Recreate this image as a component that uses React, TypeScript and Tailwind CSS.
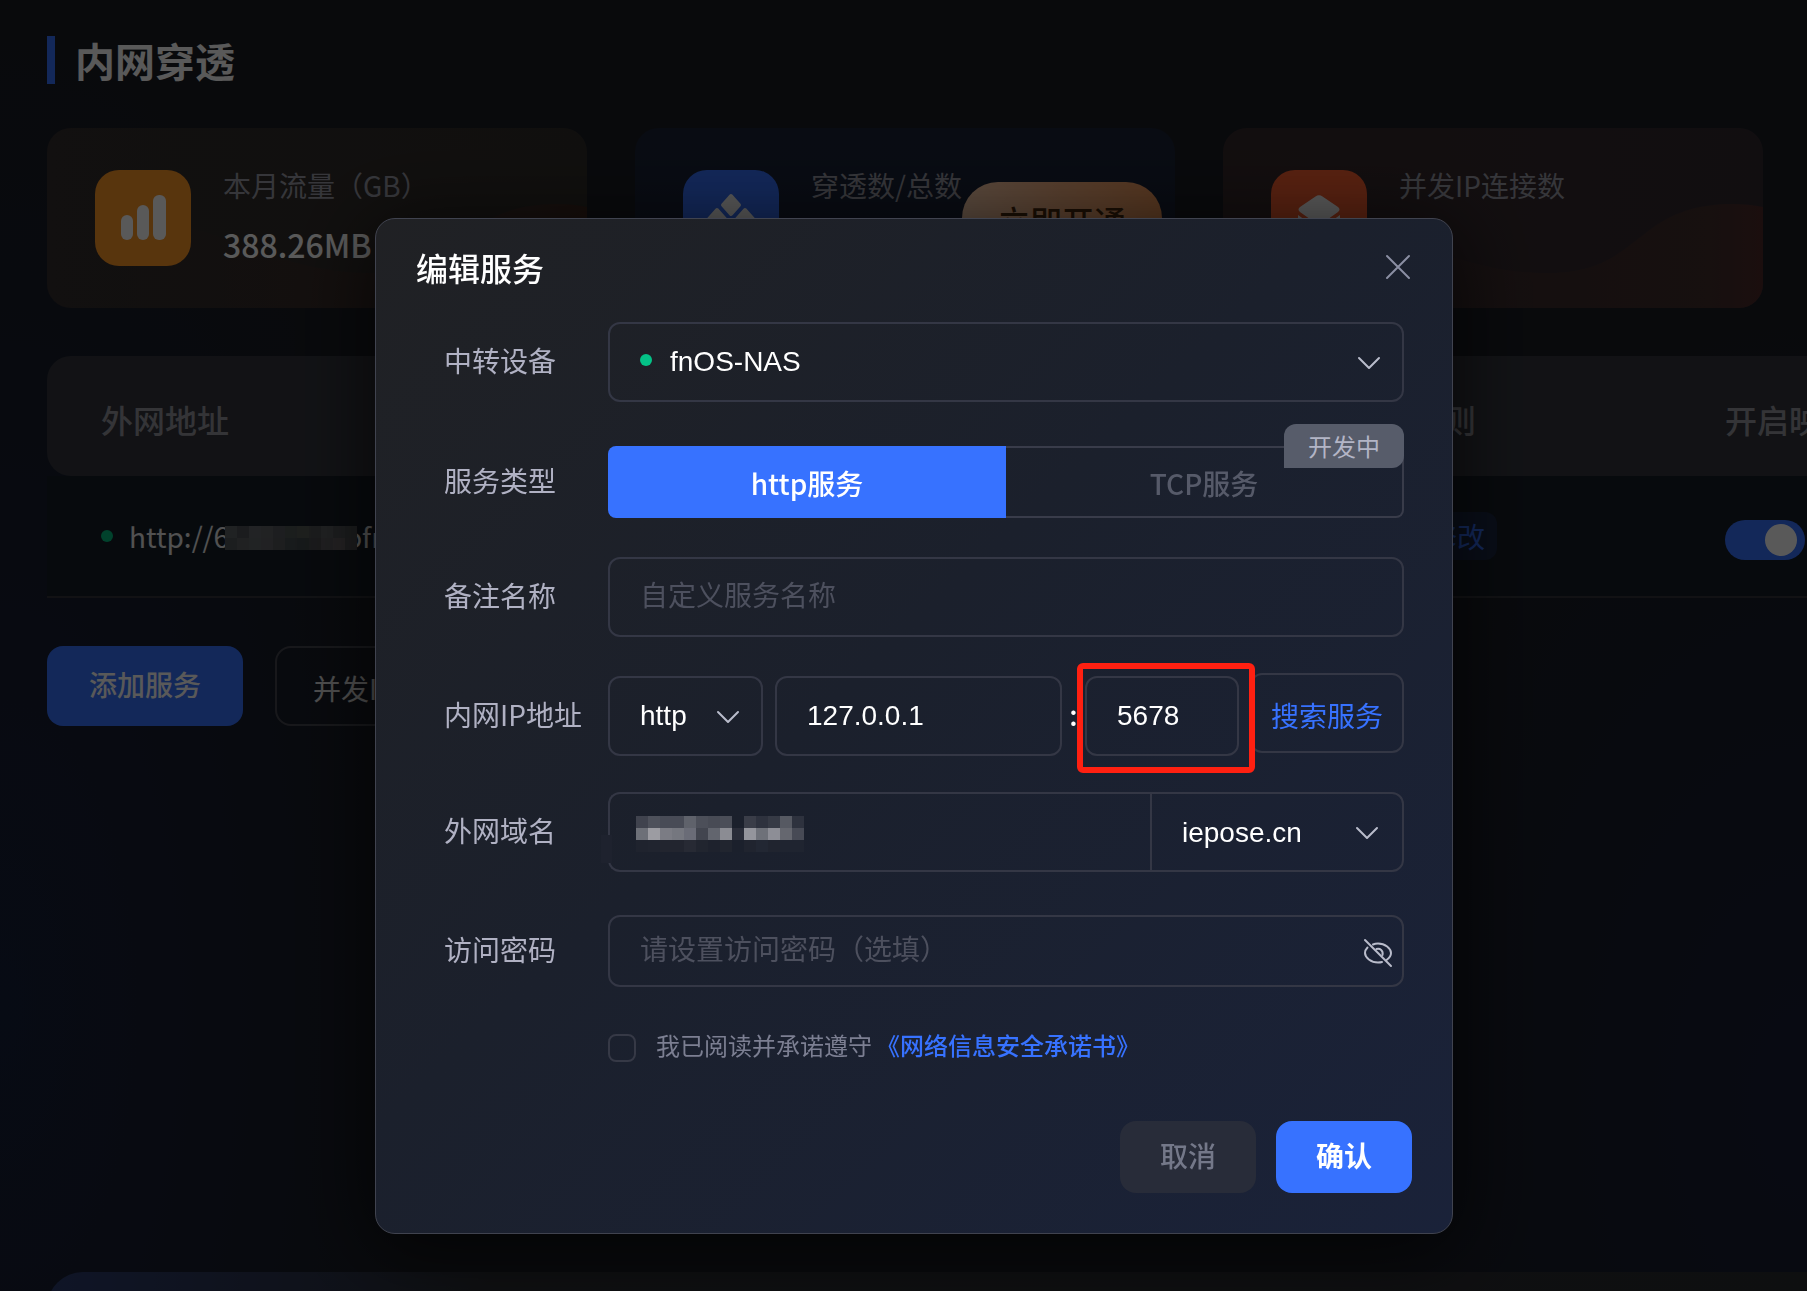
import { useState } from "react";
import type { ReactNode } from "react";
import clsx from "clsx";

const fieldClass =
  "w-full rounded-xl border-2 border-[#343745] bg-transparent px-[30px] font-['Liberation_Sans','Noto_Sans_CJK_SC',sans-serif] text-[28px] text-white outline-none placeholder:text-[#4d505e]";

// one colour per block, row by row
const domainBlocks = [
  ["#40434e", "#4e515b", "#484b56", "#484b56", "#5f626b", "#4c4f59", "#484b55", "#4b4e58", "#1b202c", "#3a3d48", "#2e323e", "#363a45", "#565962", "#2e323e"],
  ["#6d7078", "#9c9ca2", "#7b7c84", "#75777f", "#6a6c77", "#42454f", "#62656e", "#8b8c93", "#2a2d39", "#94959c", "#6e7179", "#8d8e96", "#65676f", "#474a55"],
  ["#1f232e", "#20242f", "#22252f", "#22252f", "#272a34", "#21252f", "#1e222d", "#21252f", "#1b202c", "#20242f", "#222733", "#20242f", "#1f2430", "#1f2430"],
];

const urlBlocks = [
  ["#5d6166", "#4e5257", "#63666a", "#5e6165", "#53585d", "#4f5654", "#565c56", "#4f5254", "#5c5f62", "#525458", "#4d5053"],
  ["#52565a", "#5c5f63", "#606468", "#5f6064", "#53565b", "#474d50", "#42494b", "#4b4c50", "#5b5a5e", "#655e63", "#504f54"],
];

function Blocks({ rows, className, cell }: { rows: string[][]; className?: string; cell: string }) {
  return (
    <div aria-hidden="true" className={clsx("pointer-events-none", className)}>
      {rows.map((row, y) => (
        <div key={y} className="flex">
          {row.map((color, x) => (
            <span key={x} className={cell} style={{ backgroundColor: color }} />
          ))}
        </div>
      ))}
    </div>
  );
}

function Chevron({ className }: { className?: string }) {
  return (
    <svg
      viewBox="0 0 24 14"
      fill="none"
      stroke="#b9bccb"
      strokeWidth="2"
      strokeLinecap="round"
      strokeLinejoin="round"
      className={clsx("pointer-events-none absolute h-[14px] w-6", className)}
    >
      <path d="M2 2l10 10L22 2" />
    </svg>
  );
}

function BarsIcon() {
  return (
    <svg viewBox="0 0 96 96" fill="#fff" className="size-24">
      <rect x="26" y="45" width="12" height="25" rx="6" />
      <rect x="42" y="35" width="12" height="35" rx="6" />
      <rect x="58" y="25" width="13" height="45" rx="6" />
    </svg>
  );
}

function DiamondsIcon() {
  return (
    <svg viewBox="0 0 96 96" fill="#fff" stroke="#fff" strokeWidth="4" strokeLinejoin="round" className="size-24">
      <path d="M48 26l8 9-8 9-8-9z" />
      <path d="M34 40l8 9-8 9-8-9z" />
      <path d="M62 40l8 9-8 9-8-9z" />
      <path d="M48 54l8 9-8 9-8-9z" />
    </svg>
  );
}

function LayersIcon() {
  return (
    <svg viewBox="0 0 96 96" fill="#fff" className="size-24">
      <path d="M44.500 26.500Q48 24 51.500 26.500L67 37Q70 39.500 67 42L51.500 53Q48 55.500 44.500 53L29 42Q26 39.500 29 37Z" />
      <path d="M27 45l21 15 21-15v6L51 65q-3 2-6 0L27 51z" />
    </svg>
  );
}

function Wave({ from, to, id }: { from: string; to: string; id: string }) {
  return (
    <svg viewBox="0 0 540 180" preserveAspectRatio="none" className="absolute inset-0 size-full">
      <defs>
        <linearGradient id={id} x1="0" y1="0" x2="1" y2="0">
          <stop offset="0.1" stopColor={from} stopOpacity="0" />
          <stop offset="0.9" stopColor={from} />
          <stop offset="1" stopColor={to} />
        </linearGradient>
      </defs>
      <path
        d="M0 130C60 90 120 90 170 108C230 130 270 145 325 145C420 145 410 76 510 76Q526 76 540 79V180H0Z"
        fill={`url(#${id})`}
      />
    </svg>
  );
}

interface StatCardProps {
  label: string;
  icon: ReactNode;
  wave?: ReactNode;
  className: string;
  iconClassName: string;
  children?: ReactNode;
}

function StatCard({ label, icon, wave, className, iconClassName, children }: StatCardProps) {
  return (
    <div className={clsx("relative flex h-[180px] flex-1 gap-8 overflow-hidden rounded-3xl px-12 pt-[42px]", className)}>
      {wave}
      <div className={clsx("z-10 size-24 shrink-0 rounded-3xl", iconClassName)}>{icon}</div>
      <div className="z-10 whitespace-nowrap">
        <div className="text-[28px] leading-[30px] text-[#9a9ba6]">{label}</div>
        {children}
      </div>
    </div>
  );
}

function FormRow({ label, htmlFor, className, children }: { label: string; htmlFor?: string; className?: string; children: ReactNode }) {
  return (
    <div className={clsx("flex items-center pr-2 pl-7", className)}>
      <label htmlFor={htmlFor} className="w-[164px] shrink-0 pb-1 text-[28px] leading-10 whitespace-nowrap text-[#b0b1c3]">
        {label}
      </label>
      <div className="relative min-w-0 flex-1">{children}</div>
    </div>
  );
}

function Dashboard() {
  return (
    <main className="h-full pr-11 pl-[47px]">
      <div className="flex items-center gap-5 pt-9">
        <span className="h-12 w-2 bg-[#3772ff]" />
        <h1 className="text-[40px] leading-12 font-bold text-white">内网穿透</h1>
      </div>

      <section className="mt-11 flex gap-12">
        <StatCard
          label="本月流量（GB）"
          icon={<BarsIcon />}
          wave={<Wave id="wave-traffic" from="#3e2c28" to="#40281f" />}
          className="bg-linear-to-r from-[#342e2e] to-[#302d29]"
          iconClassName="bg-[#fb9727]"
        >
          <div className="mt-6 text-[32px] leading-10 font-medium text-white">388.26MB</div>
        </StatCard>
        <StatCard
          label="穿透数/总数"
          icon={<DiamondsIcon />}
          className="bg-linear-to-b from-[#1b2437] to-[#171f36]"
          iconClassName="bg-[#3772ff]"
        >
          <button
            type="button"
            className="absolute top-[54px] right-[13px] h-[72px] w-[200px] rounded-[36px] bg-linear-to-r from-[#ffd2b0] via-[#f9b382] to-[#f39a5a] pt-1 text-[32px] leading-10 font-medium text-[#4a2a0c]"
          >
            立即开通
          </button>
        </StatCard>
        <StatCard
          label="并发IP连接数"
          icon={<LayersIcon />}
          wave={<Wave id="wave-ip" from="#422e2c" to="#4e2a2a" />}
          className="bg-linear-to-r from-[#36292b] to-[#332a30]"
          iconClassName="bg-[#fc6030]"
        />
      </section>

      <table className="mt-12 w-[1960px] table-fixed border-separate border-spacing-0 text-left">
        <thead>
          <tr className="h-[120px] text-[32px] text-[#96969f]">
            <th className="w-[1301px] rounded-l-3xl bg-[#34363e] pt-[6px] pl-[54px] font-medium">外网地址</th>
            <th className="w-[377px] bg-[#34363e] pt-[6px] font-medium">访问规则</th>
            <th className="bg-[#34363e] pt-[6px] font-medium">开启映射</th>
          </tr>
        </thead>
        <tbody>
          <tr className="h-[122px] bg-[#161d26] text-[28px] text-[#e8e8e8]">
            <td className="border-b-2 border-[#34353b] pl-[54px]">
              <div className="flex items-center">
                <span className="mr-4 size-3 rounded-full bg-[#04bd7e]" />
                <span>http://6</span>
                <Blocks rows={urlBlocks} cell="block h-3 w-3" className="z-10 mt-1 -ml-1" />
                <span className="-ml-3">ofn</span>
              </div>
            </td>
            <td className="border-b-2 border-[#34353b]">
              <button type="button" className="ml-[69px] h-12 w-20 rounded-xl bg-[#1a2744] text-[#3772ff]">
                修改
              </button>
            </td>
            <td className="border-b-2 border-[#34353b] pt-2">
              <input
                type="checkbox"
                role="switch"
                defaultChecked
                aria-label="开启映射"
                className="flex h-10 w-20 appearance-none items-center justify-end rounded-full bg-[#3772ff] pr-2 before:size-8 before:rounded-full before:bg-white"
              />
            </td>
          </tr>
        </tbody>
      </table>

      <div className="mt-12 flex gap-8">
        <button type="button" className="h-20 w-[196px] rounded-2xl bg-[#3772ff] pb-1 text-[28px] font-medium text-white">
          添加服务
        </button>
        <button type="button" className="h-20 rounded-2xl border-2 border-[#45474f] px-9 pt-1 text-[28px] text-[#e0e0e0]">
          并发IP
        </button>
      </div>

      <section className="mt-[546px] -mr-20 h-40 rounded-[36px] bg-linear-to-r from-[#2c3c70] via-[#2b2d32] via-25% to-[#2a2b30]" />
    </main>
  );
}

function EditServiceDialog() {
  const [showPassword, setShowPassword] = useState(false);
  const [agreed, setAgreed] = useState(false);

  return (
    <div
      role="dialog"
      aria-modal="true"
      aria-labelledby="dialog-title"
      className="w-[1078px] max-w-full rounded-[20px] border border-[#40434f] bg-linear-to-br from-[#202124] via-[#1b202c] via-45% to-[#1a2239] px-10 pt-6 pb-10 shadow-[0_12px_80px_rgba(0,0,0,0.7)]"
    >
      <div className="flex h-12 items-center justify-between">
        <h2 id="dialog-title" className="text-[32px] leading-12 font-medium text-white">
          编辑服务
        </h2>
        <button type="button" aria-label="关闭">
          <svg viewBox="0 0 28 28" stroke="#8b8fa3" strokeWidth="2" strokeLinecap="round" className="size-7">
            <path d="M3 3l22 22M25 3L3 25" />
          </svg>
        </button>
      </div>

      <form onSubmit={(e) => e.preventDefault()}>
        <FormRow label="中转设备" htmlFor="device" className="mt-[31px]">
          <select id="device" className={clsx(fieldClass, "block h-20 appearance-none pr-16 pl-[60px]")}>
            <option>fnOS-NAS</option>
          </select>
          <span className="absolute top-8 left-8 size-3 rounded-full bg-[#04c287]" />
          <Chevron className="top-[34px] right-[23px]" />
        </FormRow>

        <FormRow label="服务类型" className="mt-11">
          <div className="flex h-[72px] text-[28px]">
            <button type="button" className="w-1/2 rounded-l-lg bg-[#3772ff] pt-[2px] font-medium text-white">
              http服务
            </button>
            <button
              type="button"
              disabled
              className="w-1/2 rounded-r-lg border-2 border-l-0 border-[#393c4a] pt-[2px] font-medium text-[#565a69]"
            >
              TCP服务
            </button>
          </div>
          <span className="absolute -top-[22px] right-0 h-11 w-[120px] rounded-t-xl rounded-br-xl bg-[#575c6a] text-center text-2xl leading-11 text-[#b3b5c6]">
            开发中
          </span>
        </FormRow>

        <FormRow label="备注名称" htmlFor="remark" className="mt-[39px]">
          <input id="remark" type="text" placeholder="自定义服务名称" className={clsx(fieldClass, "block h-20")} />
        </FormRow>

        <FormRow label="内网IP地址" htmlFor="host" className="mt-[39px]">
          <div className="flex h-20 items-center">
            <div className="relative w-[155px]">
              <select aria-label="协议" className={clsx(fieldClass, "block h-20 appearance-none pr-12")}>
                <option>http</option>
                <option>https</option>
              </select>
              <Chevron className="top-[34px] right-[23px]" />
            </div>
            <input id="host" type="text" defaultValue="127.0.0.1" className={clsx(fieldClass, "ml-3 h-20 min-w-0 flex-1")} />
            <span className="w-[23px] pb-1 text-center text-[28px] leading-10 font-medium text-white">:</span>
            <div className="relative w-[154px]">
              <input aria-label="端口" type="text" defaultValue="5678" className={clsx(fieldClass, "block h-20")} />
              <span className="pointer-events-none absolute -top-[13px] -left-2 z-10 h-[110px] w-[178px] rounded-md border-6 border-[#ff2011]" />
            </div>
            <button
              type="button"
              className="mb-[6px] ml-[11px] h-20 w-[154px] rounded-xl border-2 border-[#343745] pt-1 text-[28px] text-[#3772ff]"
            >
              搜索服务
            </button>
          </div>
        </FormRow>

        <FormRow label="外网域名" htmlFor="domain" className="mt-9">
          <div className="flex">
            <div className="relative min-w-0 flex-1">
              <input id="domain" type="text" className={clsx(fieldClass, "block h-20 rounded-r-none border-r-0")} />
              <Blocks rows={domainBlocks} cell="block size-3" className="absolute top-6 left-7" />
              <span className="absolute top-[43px] -left-[7px] h-7 w-[11px] bg-[#1e222e]" />
            </div>
            <div className="relative w-[254px]">
              <select aria-label="域名后缀" className={clsx(fieldClass, "block h-20 appearance-none rounded-l-none pt-[2px]")}>
                <option>iepose.cn</option>
              </select>
              <Chevron className="top-[34px] right-[25px]" />
            </div>
          </div>
        </FormRow>

        <FormRow label="访问密码" htmlFor="password" className="mt-[43px]">
          <input
            id="password"
            type={showPassword ? "text" : "password"}
            placeholder="请设置访问密码（选填）"
            className={clsx(fieldClass, "block h-[72px] pr-14")}
          />
          <button
            type="button"
            aria-label="显示密码"
            onClick={() => setShowPassword((v) => !v)}
            className="absolute top-[23px] right-[10px]"
          >
            <svg viewBox="0 0 32 30" fill="none" stroke="#b9bccb" strokeWidth="2" strokeLinecap="round" className="h-[30px] w-8">
              <path d="M3 2l26 26" />
              <path d="M11 6.500C12.500 5.800 14 5.500 16 5.500C23 5.500 29 10.500 29 15C29 17.500 27.500 20 24.500 22" />
              <path d="M5.500 9.500C3.800 11.200 3 13 3 15C3 19.500 9 24.500 16 24.500C17.500 24.500 18.600 24.400 20 24" />
              <path d="M14.500 11C18 10 21.500 12.500 20.500 17" />
            </svg>
          </button>
        </FormRow>

        <div className="mt-[47px] flex h-7 items-center pl-[192px] text-2xl leading-7 whitespace-nowrap">
          <input
            id="agree"
            type="checkbox"
            checked={agreed}
            onChange={(e) => setAgreed(e.target.checked)}
            className="size-7 appearance-none rounded-lg border-2 border-[#363946] checked:bg-[#3772ff]"
          />
          <label htmlFor="agree" className="ml-5 pb-[6px] text-[#7c7f92]">
            我已阅读并承诺遵守
          </label>
          <a href="#pledge" className="ml-1 pb-[6px] font-medium text-[#3772ff]">
            《网络信息安全承诺书》
          </a>
        </div>

        <div className="mt-[59px] flex justify-end gap-5 text-[28px] font-medium">
          <button type="button" className="h-[72px] w-[136px] rounded-2xl bg-[#282c39] pb-1 text-[#747889]">
            取消
          </button>
          <button type="submit" className="h-[72px] w-[136px] rounded-2xl bg-[#3772ff] pb-1 font-bold text-white">
            确认
          </button>
        </div>
      </form>
    </div>
  );
}

export default function App() {
  return (
    <div
      lang="zh-CN"
      className="relative h-screen overflow-hidden bg-[#1a1d24] bg-[radial-gradient(ellipse_24%_75%_at_0%_78%,#16203a,transparent),radial-gradient(ellipse_26%_60%_at_100%_85%,#171e36,transparent)] font-['Noto_Sans_CJK_SC',sans-serif]"
    >
      <Dashboard />
      <div className="fixed inset-0 z-20 flex items-start justify-center overflow-hidden bg-black/65 pt-[218px] pl-[21px]">
        <EditServiceDialog />
      </div>
    </div>
  );
}
